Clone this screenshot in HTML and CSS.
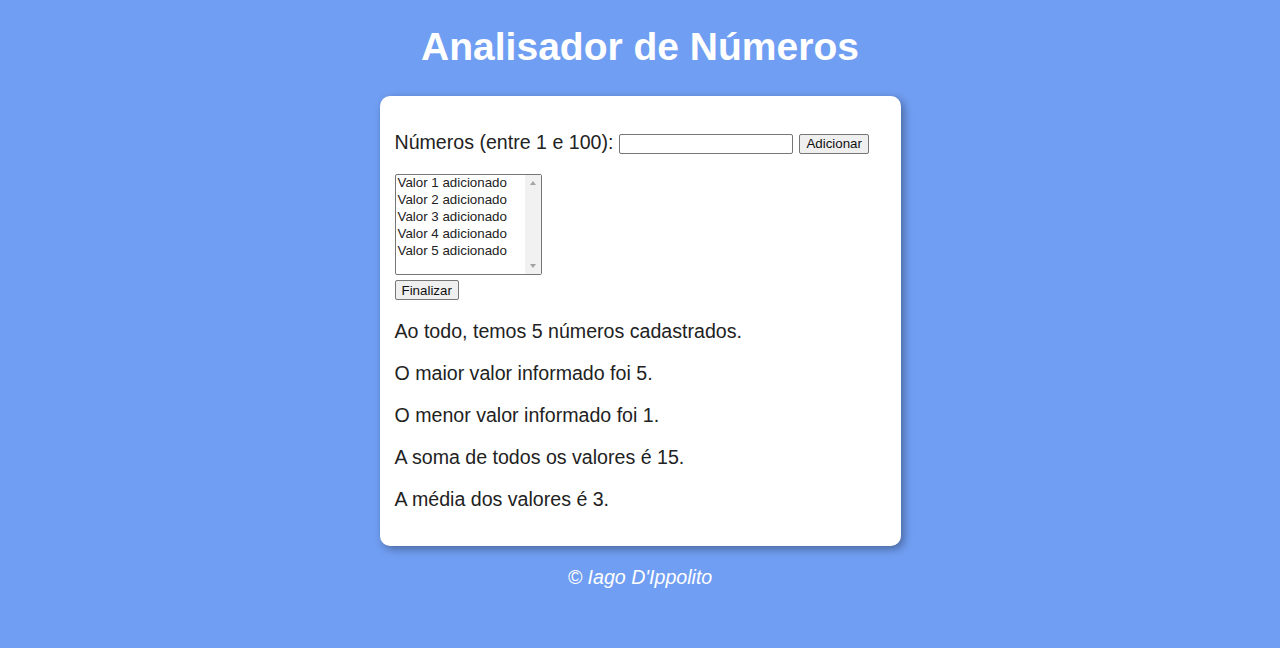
FILE: index.html
```html
<!DOCTYPE html>
<html lang="pt-BR">
<head>
<meta charset="utf-8">
<title>Analisador de Números</title>
<link rel="stylesheet" href="styles.css">
</head>
<body>
<header class="top">
  <h1 class="title">Analisador de Números</h1>
</header>
<section class="card">
  <div class="entry">
    <label class="entry-label" for="num">Números (entre 1 e 100):</label>
    <input class="entry-input" type="number" id="num">
    <button class="btn">Adicionar</button>
  </div>
  <div class="listbox">
    <select class="list" size="6">
      <option>Valor 1 adicionado</option>
      <option>Valor 2 adicionado</option>
      <option>Valor 3 adicionado</option>
      <option>Valor 4 adicionado</option>
      <option>Valor 5 adicionado</option>
    </select>
    <div class="scrollbar" aria-hidden="true">
      <span class="arrow arrow-up"></span>
      <span class="arrow arrow-down"></span>
    </div>
  </div>
  <div class="actions"><button class="btn">Finalizar</button></div>
  <div class="result">
    <p class="line">Ao todo, temos 5 números cadastrados.</p>
    <p class="line">O maior valor informado foi 5.</p>
    <p class="line">O menor valor informado foi 1.</p>
    <p class="line">A soma de todos os valores é 15.</p>
    <p class="line">A média dos valores é 3.</p>
  </div>
</section>
<footer class="foot">
  <p class="credit">© Iago D'Ippolito</p>
</footer>
</body>
</html>
```
FILE: styles.css
```css
html, body {
  margin: 0;
  padding: 0;
}
body {
  background: #709ef2;
  font-family: "Liberation Sans", Arial, sans-serif;
  color: #222;
  display: flex;
  flex-direction: column;
  align-items: center;
  min-height: 648px;
}
.top {
  width: 100%;
  text-align: center;
}
.title {
  margin: 24px 0 0;
  color: #fff;
  font-size: 39px;
  line-height: 46px;
  font-weight: bold;
}
.card {
  margin-top: 26px;
  width: 521px;
  box-sizing: border-box;
  background: #fff;
  border-radius: 10px;
  padding: 18px 15px 15px;
  box-shadow: 3px 3px 8px rgba(0, 0, 0, 0.35);
}
.entry {
  display: flex;
  align-items: center;
  gap: 6px;
  height: 56px;
}
.entry-label {
  font-size: 19.6px;
  color: #222;
}
.entry-input {
  width: 174px;
  height: 20px;
  box-sizing: border-box;
  margin: 3px 0 0;
  padding: 1px 2px;
  border: 1px solid #767676;
  border-radius: 2px;
  font-size: 13.33px;
  font-family: "Liberation Sans", Arial, sans-serif;
}
.btn {
  font-family: "Liberation Sans", Arial, sans-serif;
  font-size: 13.33px;
  color: #111;
  height: 20px;
  padding: 1px 6px;
  margin: 3px 0 0;
  background: #efefef;
  border: 1px solid #767676;
  border-radius: 2px;
}
.listbox {
  position: relative;
  width: 147px;
  height: 101px;
  margin-top: 4px;
}
.list {
  display: block;
  width: 147px;
  height: 101px;
  box-sizing: border-box;
  font-size: 13.33px;
  font-family: "Liberation Sans", Arial, sans-serif;
  color: #222;
  border: 1px solid #767676;
  border-radius: 2px;
  padding: 0;
  overflow: hidden;
}
.list option {
  padding: 0 2px 1px;
  line-height: 15.5px;
}
.scrollbar {
  position: absolute;
  top: 1px;
  right: 1px;
  bottom: 1px;
  width: 16px;
  background: #f1f1f1;
}
.arrow {
  position: absolute;
  left: 5px;
  width: 0;
  height: 0;
  border-left: 3.5px solid transparent;
  border-right: 3.5px solid transparent;
}
.arrow-up {
  top: 6px;
  border-bottom: 4px solid #a3a3a3;
}
.arrow-down {
  bottom: 6px;
  border-top: 4px solid #a3a3a3;
}
.actions {
  margin-top: 5px;
}
.actions .btn {
  margin: 0;
}
.result {
  margin-top: 20px;
}
.line {
  font-size: 19.6px;
  line-height: 23px;
  margin: 0 0 19px;
}
.line:last-child {
  margin-bottom: 20px;
}
.foot {
  text-align: center;
}
.credit {
  color: #fff;
  font-style: italic;
  font-size: 19.6px;
  margin: 20px 0 0;
}
```
